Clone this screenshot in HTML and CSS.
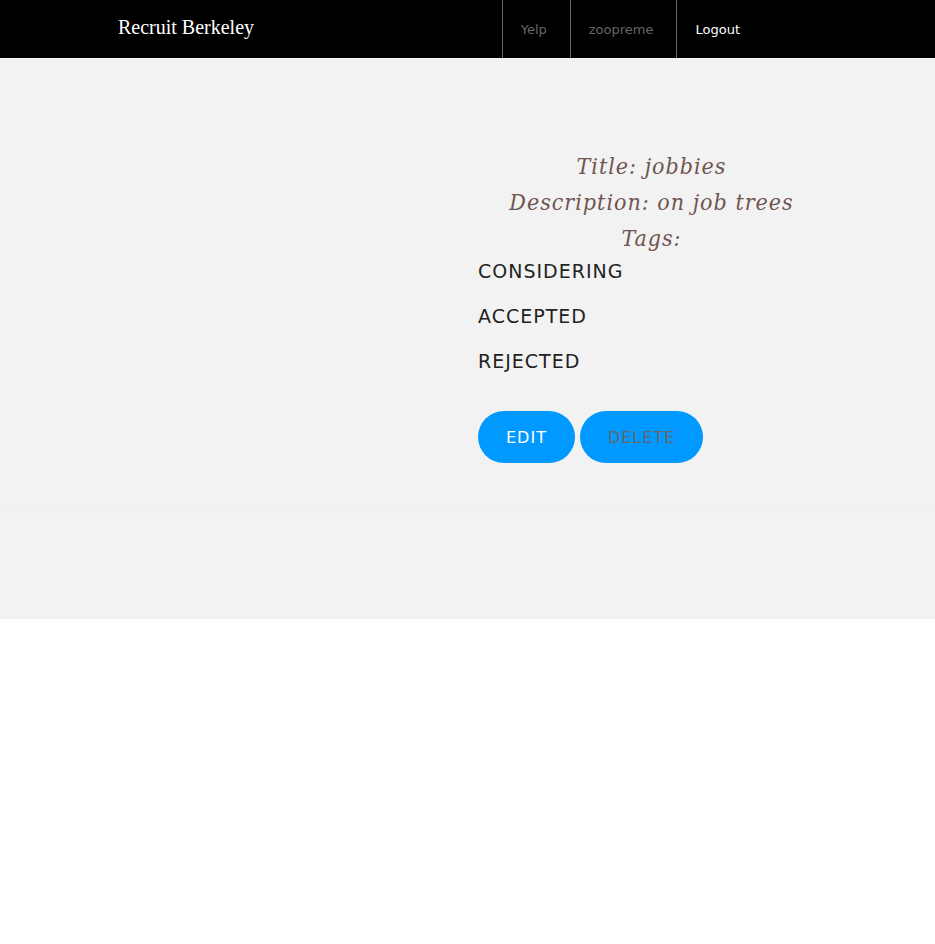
FILE: index.html
```html
<!DOCTYPE html>
<html lang="en">
<head>
<meta charset="utf-8">
<title>Recruit Berkeley</title>
<link rel="stylesheet" href="styles.css">
</head>
<body>
<header class="topbar">
  <a class="brand" href="#">Recruit Berkeley</a>
  <nav class="nav">
    <a class="nav-link" href="#">Yelp</a>
    <a class="nav-link" href="#">zoopreme</a>
    <a class="nav-link nav-active" href="#">Logout</a>
  </nav>
</header>
<main class="job">
  <section class="details">
    <div class="summary">
      <p>Title: jobbies</p>
      <p>Description: on job trees</p>
      <p>Tags:</p>
    </div>
    <h3 class="status">Considering</h3>
    <h3 class="status">Accepted</h3>
    <h3 class="status">Rejected</h3>
    <div class="actions">
      <a class="button" href="#">Edit</a>
      <button class="button button-muted" type="button">Delete</button>
    </div>
  </section>
</main>
<footer class="footer"></footer>
</body>
</html>
```
FILE: styles.css
```css
* { box-sizing: border-box; }
body {
  margin: 0;
  background: #fff;
  font-family: Verdana, "DejaVu Sans", sans-serif;
}
a { text-decoration: none; }
.topbar {
  display: flex;
  justify-content: space-between;
  padding: 0 172px 0 118px;
  background: #000;
}
.brand {
  color: #fff;
  font: 20px/55px "Liberation Serif", serif;
}
.nav { display: flex; }
.nav-link {
  padding: 2px 23px 0 18px;
  border-left: 1px solid #666;
  color: #666;
  font-size: 13px;
  line-height: 56px;
}
.nav-active { color: #fff; }
.job {
  display: grid;
  grid-template-columns: 1fr 347px;
  padding: 90px 110px 45px;
  border-bottom: 1px solid #eee;
  background: #f2f2f2;
}
.details { grid-column: 2; }
.summary {
  color: #6f5550;
  font: italic 23px/36px "DejaVu Serif Condensed", "DejaVu Serif", serif;
  letter-spacing: 1px;
  text-align: center;
}
.summary p { margin: 0; }
.status {
  margin: 0 0 15px;
  color: #222;
  font-size: 19px;
  font-weight: 400;
  line-height: 30px;
  letter-spacing: 1px;
  text-transform: uppercase;
}
.actions {
  display: flex;
  gap: 5px;
  padding-top: 20px;
}
.button {
  padding: 2px 28px 0;
  border: 0;
  border-radius: 26px;
  background: #09f;
  color: #fff;
  font: 16px/50px Verdana, "DejaVu Sans", sans-serif;
  letter-spacing: 1px;
  text-transform: uppercase;
}
.button-muted { color: #666; }
.footer {
  height: 110px;
  background: #f2f2f2;
}
```
